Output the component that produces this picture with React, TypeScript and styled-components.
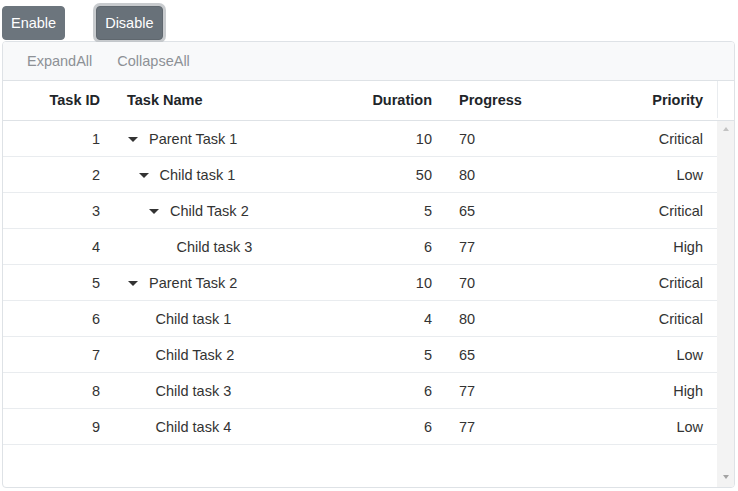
import React from "react";
import styled, { createGlobalStyle, css } from "styled-components";

const Global = createGlobalStyle`
  html, body { margin: 0; padding: 0; background: #fff; }
  body { font-family: "Liberation Sans", Arial, sans-serif; font-size: 14.5px; color: #212529; }
  * { box-sizing: border-box; }
`;

const Page = styled.div`
  padding: 6px 3px 0 2px;
`;

const ButtonRow = styled.div`
  display: flex;
  gap: 31px;
  height: 35px;
`;

const Btn = styled.button<{ $focused?: boolean }>`
  font-family: "Liberation Sans", Arial, sans-serif;
  font-size: 14.5px;
  color: #fff;
  background: #6c757d;
  border: 1px solid #6c757d;
  border-radius: 4px;
  height: 34px;
  padding: 0 8px;
  line-height: 32px;
  cursor: pointer;
  ${(p) =>
    p.$focused &&
    css`
      background: #687179;
      border-color: #5f676e;
      box-shadow: 0 0 0 3px rgba(190, 194, 198, 0.85);
    `}
`;

const Grid = styled.div`
  width: 733px;
  height: 447px;
  border: 1px solid #dee2e6;
  border-radius: 4px;
  display: flex;
  flex-direction: column;
  overflow: hidden;
`;

const Toolbar = styled.div`
  height: 39px;
  background: #f8f9fa;
  border-bottom: 1px solid #dee2e6;
  display: flex;
  align-items: center;
  gap: 25px;
  padding-left: 24px;
`;

const ToolItem = styled.span`
  color: #8d9196;
  font-size: 14.5px;
`;

const cols = "111px 220px 112px 135px 136px";

const HeaderRow = styled.div`
  display: flex;
  height: 40px;
  padding-bottom: 2px;
  border-bottom: 1px solid #dee2e6;
`;

const HeaderCells = styled.div`
  display: grid;
  grid-template-columns: ${cols};
  width: 714px;
`;

const Cell = styled.div<{ $right?: boolean; $bold?: boolean }>`
  display: flex;
  align-items: center;
  justify-content: ${(p) => (p.$right ? "flex-end" : "flex-start")};
  padding: 0 14px 0 13px;
  font-weight: ${(p) => (p.$bold ? 700 : 400)};
  color: ${(p) => (p.$bold ? "#212529" : "#333")};
  white-space: nowrap;
`;

const HeaderGap = styled.div`
  width: 17px;
  border-left: 1px solid #e9ecef;
`;

const Body = styled.div`
  flex: 1;
  display: flex;
  min-height: 0;
`;

const Rows = styled.div`
  width: 714px;
`;

const Row = styled.div`
  display: grid;
  grid-template-columns: ${cols};
  height: 36px;
  border-bottom: 1px solid #e9ecef;
`;

const Scrollbar = styled.div`
  width: 17px;
  background: #f3f3f3;
  display: flex;
  flex-direction: column;
  justify-content: space-between;
  align-items: center;
  padding: 6px 0 8px;
`;

const Arrow = styled.div<{ $up?: boolean }>`
  width: 0;
  height: 0;
  border-left: 3px solid transparent;
  border-right: 3px solid transparent;
  ${(p) =>
    p.$up
      ? css`border-bottom: 4px solid #c3c3c3;`
      : css`border-top: 4px solid #a3a3a3;`}
`;

const NameWrap = styled.div<{ $indent: number }>`
  display: flex;
  align-items: center;
  padding-left: ${(p) => p.$indent}px;
`;

const Caret = styled.span`
  width: 0;
  height: 0;
  border-left: 5px solid transparent;
  border-right: 5px solid transparent;
  border-top: 5px solid #333;
  margin-right: 11px;
  margin-top: 1px;
`;

type Task = {
  id: number;
  name: string;
  level: number;
  parent: boolean;
  duration: number;
  progress: number;
  priority: string;
};

const tasks: Task[] = [
  { id: 1, name: "Parent Task 1", level: 0, parent: true, duration: 10, progress: 70, priority: "Critical" },
  { id: 2, name: "Child task 1", level: 1, parent: true, duration: 50, progress: 80, priority: "Low" },
  { id: 3, name: "Child Task 2", level: 2, parent: true, duration: 5, progress: 65, priority: "Critical" },
  { id: 4, name: "Child task 3", level: 3, parent: false, duration: 6, progress: 77, priority: "High" },
  { id: 5, name: "Parent Task 2", level: 0, parent: true, duration: 10, progress: 70, priority: "Critical" },
  { id: 6, name: "Child task 1", level: 1, parent: false, duration: 4, progress: 80, priority: "Critical" },
  { id: 7, name: "Child Task 2", level: 1, parent: false, duration: 5, progress: 65, priority: "Low" },
  { id: 8, name: "Child task 3", level: 1, parent: false, duration: 6, progress: 77, priority: "High" },
  { id: 9, name: "Child task 4", level: 1, parent: false, duration: 6, progress: 77, priority: "Low" },
];

function indentFor(t: Task): number {
  if (t.parent) return 1 + t.level * 10.5;
  return 18 + t.level * 10.5;
}

export default function App() {
  return (
    <>
      <Global />
      <Page>
        <ButtonRow>
          <Btn>Enable</Btn>
          <Btn $focused>Disable</Btn>
        </ButtonRow>
        <Grid>
          <Toolbar>
            <ToolItem>ExpandAll</ToolItem>
            <ToolItem>CollapseAll</ToolItem>
          </Toolbar>
          <HeaderRow>
            <HeaderCells>
              <Cell $right $bold>Task ID</Cell>
              <Cell $bold>Task Name</Cell>
              <Cell $right $bold>Duration</Cell>
              <Cell $bold>Progress</Cell>
              <Cell $right $bold>Priority</Cell>
            </HeaderCells>
            <HeaderGap />
          </HeaderRow>
          <Body>
            <Rows>
              {tasks.map((t) => (
                <Row key={t.id}>
                  <Cell $right>{t.id}</Cell>
                  <Cell>
                    <NameWrap $indent={indentFor(t)}>
                      {t.parent && <Caret />}
                      {t.name}
                    </NameWrap>
                  </Cell>
                  <Cell $right>{t.duration}</Cell>
                  <Cell>{t.progress}</Cell>
                  <Cell $right>{t.priority}</Cell>
                </Row>
              ))}
            </Rows>
            <Scrollbar>
              <Arrow $up />
              <Arrow />
            </Scrollbar>
          </Body>
        </Grid>
      </Page>
    </>
  );
}
